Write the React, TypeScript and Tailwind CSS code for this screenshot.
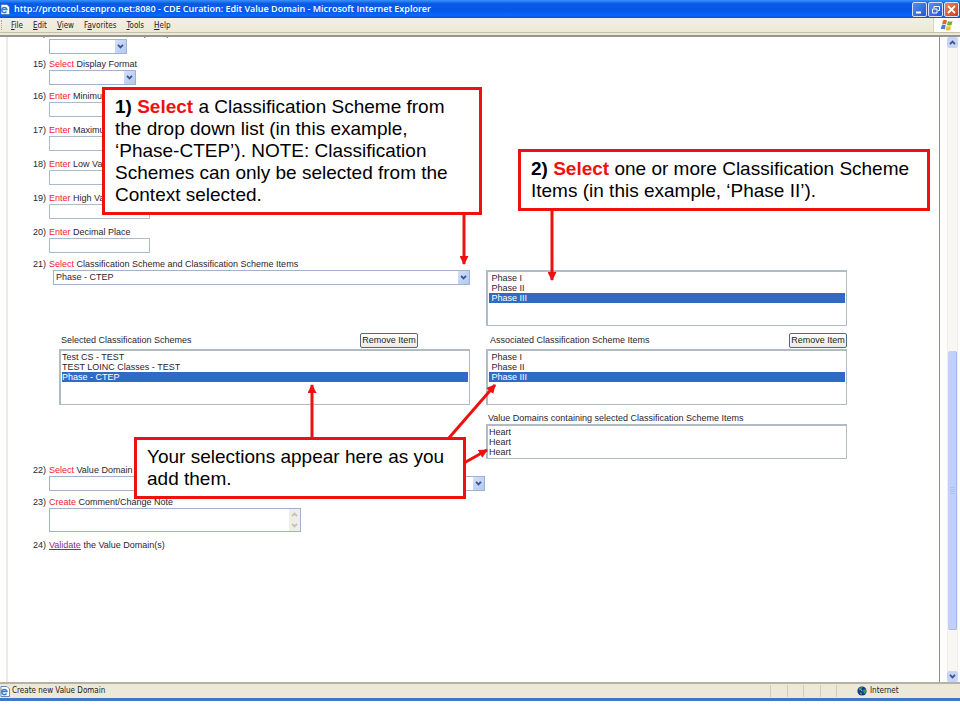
import type { ReactNode } from "react";

const FORM_FONT = "font-['Liberation_Sans',Arial,sans-serif]";
const UI_FONT = "font-['DejaVu_Sans_Condensed','DejaVu_Sans',sans-serif]";

function Chevron({ up = false, color = "#3d5589" }: { up?: boolean; color?: string }) {
  return (
    <svg viewBox="0 0 8 6" className="h-[5px] w-[7px]" fill="none" stroke={color} strokeWidth="2.200">
      <path d={up ? "M1 5 L4 2 L7 5" : "M1 1 L4 4 L7 1"} />
    </svg>
  );
}

function Dropdown({ id, className, children }: { id: string; className: string; children?: ReactNode }) {
  return (
    <div className={`relative ${className}`}>
      <select
        id={id}
        className="block h-[15px] w-full appearance-none border border-[#9fb4cb] bg-white pl-[2px] text-[9px] leading-[13px] text-[#2c2430] outline-none"
      >
        {children}
      </select>
      <span className="pointer-events-none absolute top-px right-px flex h-[13px] w-[11px] items-center justify-center bg-gradient-to-br from-[#d3dffc] to-[#b3c8f4]">
        <Chevron />
      </span>
    </div>
  );
}

function ListBox({
  id,
  items,
  selected = [],
  className,
}: {
  id: string;
  items: string[];
  selected?: string[];
  className: string;
}) {
  return (
    <select
      id={id}
      multiple
      size={5}
      defaultValue={selected}
      className={`block w-full appearance-none overflow-hidden rounded-none border border-t-2 border-l-2 border-[#b0bcc4] bg-white p-px text-[9px] text-[#2c2430] outline-none ${className}`}
    >
      {items.map((item, i) => (
        <option
          key={i}
          value={item}
          className="h-[10px] min-h-0 px-0 py-0 leading-[10px] checked:bg-[#316ac5] checked:bg-[linear-gradient(#316ac5,#316ac5)] checked:text-white"
        >
          {item}
        </option>
      ))}
    </select>
  );
}

function Item({
  n,
  verb,
  text,
  htmlFor,
  className = "mb-2",
  children,
}: {
  n: number;
  verb: string;
  text: string;
  htmlFor: string;
  className?: string;
  children: ReactNode;
}) {
  return (
    <div className={`flex ${className}`}>
      <span className="w-4 shrink-0">{n})</span>
      <div className="min-w-0 flex-1">
        <label htmlFor={htmlFor} className="block whitespace-nowrap">
          <span className="text-[#f0202c]">{verb}</span> {text}
        </label>
        {children}
      </div>
    </div>
  );
}

function TextBox({ id }: { id: string }) {
  return <input id={id} type="text" className="block h-[15px] w-[101px] border border-[#a9bccd] bg-white px-1 outline-none" />;
}

function RemoveButton() {
  return (
    <button className="h-[15px] w-[58px] rounded-[2px] border border-[#4d6a86] bg-gradient-to-b from-white to-[#ecebe4] text-center text-[9px] leading-[13px] whitespace-nowrap text-[#222]">
      Remove Item
    </button>
  );
}

function PageIcon() {
  return (
    <svg viewBox="0 0 10 11" className="h-[11px] w-[10px] shrink-0">
      <path d="M1 .5h6l2.500 2.500v7.500h-8.500z" fill="#fff" stroke="#4a6fa5" strokeWidth=".8" />
      <path d="M6.500 7.500a2.600 2.600 0 1 1 .4-2h-4.500" fill="none" stroke="#2a7fdc" strokeWidth="1.500" />
    </svg>
  );
}

function Callout({ className, children }: { className: string; children: ReactNode }) {
  return (
    <div
      className={`absolute border-[3px] border-[#ee1111] bg-white px-[10px] py-[6px] text-[19px] leading-[22px] whitespace-nowrap text-black ${className}`}
    >
      {children}
    </div>
  );
}

function Arrows() {
  return (
    <svg className="pointer-events-none absolute top-0 left-0 h-[720px] w-[960px]" stroke="#ee1111" strokeWidth="3" fill="none">
      <defs>
        <marker id="head" viewBox="0 0 9 9" refX="8" refY="4.500" markerWidth="9" markerHeight="9" markerUnits="userSpaceOnUse" orient="auto">
          <path d="M0 0 L9 4.500 L0 9z" fill="#ee1111" stroke="none" />
        </marker>
      </defs>
      <path d="M464 213V264" markerEnd="url(#head)" />
      <path d="M552 208V280" markerEnd="url(#head)" />
      <path d="M312 438V385" markerEnd="url(#head)" />
      <path d="M448 439L495 385" markerEnd="url(#head)" />
      <path d="M464 463L487 450" markerEnd="url(#head)" />
    </svg>
  );
}

function TitleBar() {
  const btn = "flex h-[15px] w-[15px] items-center justify-center rounded-[2px] border border-[#d7e3fb]";
  return (
    <header className="flex h-[18px] shrink-0 items-center bg-[linear-gradient(#3a93ff,#0a5ae6_20%,#0458e8_60%,#0868fc_85%,#0450d8)] pr-px">
      <PageIcon />
      <h1 className="flex-1 pl-1 font-['Open_Sans','Noto_Sans',sans-serif] text-[9px] leading-[18px] font-semibold whitespace-nowrap text-white">
        http://protocol.scenpro.net:8080 - CDE Curation: Edit Value Domain - Microsoft Internet Explorer
      </h1>
      <div className="flex gap-px">
        <button aria-label="Minimize" className={`${btn} bg-gradient-to-br from-[#5a8df0] to-[#2456cf]`}>
          <svg viewBox="0 0 13 13" className="h-[13px] w-[13px]"><path d="M3 9.500h5" stroke="#fff" strokeWidth="2" /></svg>
        </button>
        <button aria-label="Restore" className={`${btn} bg-gradient-to-br from-[#5a8df0] to-[#2456cf]`}>
          <svg viewBox="0 0 13 13" className="h-[13px] w-[13px]" fill="none" stroke="#fff">
            <path d="M5 5V3.500h5.500v4H9" />
            <path d="M3.500 6h4.500v4h-4.500z" />
          </svg>
        </button>
        <button aria-label="Close" className={`${btn} bg-gradient-to-br from-[#f0835f] to-[#cc3a14]`}>
          <svg viewBox="0 0 13 13" className="h-[13px] w-[13px]"><path d="M3 3l7 7M10 3l-7 7" stroke="#fff" strokeWidth="1.800" /></svg>
        </button>
      </div>
    </header>
  );
}

function MenuBar() {
  const menus: [string, string, string][] = [
    ["", "F", "ile"],
    ["", "E", "dit"],
    ["", "V", "iew"],
    ["F", "a", "vorites"],
    ["", "T", "ools"],
    ["", "H", "elp"],
  ];
  return (
    <nav className={`flex h-[15px] shrink-0 items-stretch border-b border-[#c4c0ae] bg-gradient-to-b from-[#f1f0e3] to-[#ece9d5] ${UI_FONT}`}>
      <div className="my-[2px] ml-px border-l border-dotted border-[#a8a594]" />
      <div className="flex flex-1 items-center gap-[10px] pt-px pl-[9px]">
        {menus.map(([a, u, b]) => (
          <button key={u} className="text-[8px] leading-[13px] text-[#222]">
            {a}
            <span className="underline">{u}</span>
            {b}
          </button>
        ))}
      </div>
      <div className="flex w-[27px] items-center justify-center border-l border-[#d8d4c0] bg-white">
        <svg viewBox="0 0 14 12" className="h-3 w-[14px]">
          <path d="M3 1.500q2-1.500 4 0l-1 4q-2-1.200-4 0z" fill="#e8642c" />
          <path d="M8 2q2 1.200 4.500 0l-1 4q-2.300 1.200-4.500 0z" fill="#6cb33e" />
          <path d="M1.700 6.500q2-1.300 4 0l-1 4q-2-1.300-4 0z" fill="#3f7fd8" />
          <path d="M6.700 7q2.200 1.200 4.500 0l-1 4q-2.300 1.200-4.500 0z" fill="#f2bc2a" />
        </svg>
      </div>
    </nav>
  );
}

function Scrollbar() {
  const btn = "flex h-[11px] items-center justify-center rounded-[2px] bg-[#c5d4f8]";
  return (
    <div className="flex w-[21px] shrink-0 flex-col border-l border-[#8e8e8a] bg-[#fdfdfb] pr-[2px] pl-[7px]">
      <button aria-label="Scroll up" className={btn}>
        <Chevron up />
      </button>
      <div className="flex flex-1 flex-col border-x border-[#efeee8] bg-[#f8f7f2]">
        <div className="flex-[303]" />
        <div className="flex flex-[278] flex-col items-center justify-center gap-px rounded-[2px] border-r border-b border-[#a6b9e8] bg-gradient-to-r from-[#c4d0f8] to-[#bdd0fb]">
          <i className="h-px w-[5px] bg-[#aec1f0]" />
          <i className="h-px w-[5px] bg-[#aec1f0]" />
          <i className="h-px w-[5px] bg-[#aec1f0]" />
          <i className="h-px w-[5px] bg-[#aec1f0]" />
        </div>
        <div className="flex-[41]" />
      </div>
      <button aria-label="Scroll down" className={btn}>
        <Chevron />
      </button>
    </div>
  );
}

function StatusBar() {
  return (
    <footer
      className={`flex h-[19px] shrink-0 items-stretch border-t-2 border-b-[3px] border-t-[#b5b2a4] border-b-[#3f78c8] bg-[#ece9d8] text-[8px] leading-[14px] text-[#222] ${UI_FONT}`}
    >
      <div className="flex flex-1 items-center gap-[2px]">
        <PageIcon />
        <span>Create new Value Domain</span>
      </div>
      <div className="flex w-[83px]">
        {[0, 1, 2, 3, 4].map((i) => (
          <span key={i} className="my-px flex-1 border-l border-[#cfccba]" />
        ))}
      </div>
      <div className="flex w-[107px] items-center gap-[3px] pl-1">
        <svg viewBox="0 0 10 10" className="h-[10px] w-[10px]">
          <circle cx="5" cy="5" r="4.600" fill="#123a86" />
          <path d="M1.500 3q2-2.500 4-2l-1 2.500-2 1zM6 4l3-1v3l-2 2zM3 6l2 1v2l-2-1z" fill="#3f9a4a" />
          <path d="M3.500 3.500l2 1.500" stroke="#9cc4f0" />
        </svg>
        <span>Internet</span>
      </div>
    </footer>
  );
}

export default function App() {
  return (
    <div className={`relative h-screen overflow-hidden bg-white pb-[19px] ${FORM_FONT}`}>
      <div className="flex h-full flex-col">
        <TitleBar />
        <MenuBar />
        <div className="h-1 shrink-0 border-b-2 border-[#98958a] bg-[#ece9d8]" />

        <div className="flex min-h-0 flex-1">
          <div className="w-2 shrink-0 border-r-2 border-[#eeece0]" />
          <main className="min-w-0 flex-1 overflow-hidden pr-[92px] pl-[25px] text-[9px] leading-[11px] text-[#2c2430]">
            <div className="-mt-[9px]">
              <Item n={14} verb="Select" text="Unit of Measure (UOM)" htmlFor="uom" className="mb-[5px]">
                <Dropdown id="uom" className="w-[78px]" />
              </Item>
              <Item n={15} verb="Select" text="Display Format" htmlFor="format" className="mb-[6px]">
                <Dropdown id="format" className="w-[87px]" />
              </Item>
              <Item n={16} verb="Enter" text="Minimum Length" htmlFor="minlen">
                <TextBox id="minlen" />
              </Item>
              <Item n={17} verb="Enter" text="Maximum Length" htmlFor="maxlen">
                <TextBox id="maxlen" />
              </Item>
              <Item n={18} verb="Enter" text="Low Value" htmlFor="low">
                <TextBox id="low" />
              </Item>
              <Item n={19} verb="Enter" text="High Value" htmlFor="high">
                <TextBox id="high" />
              </Item>
              <Item n={20} verb="Enter" text="Decimal Place" htmlFor="decimal" className="mb-[6px]">
                <TextBox id="decimal" />
              </Item>

              <Item n={21} verb="Select" text="Classification Scheme and Classification Scheme Items" htmlFor="scheme" className="mb-[6px]">
                <div className="grid grid-cols-[421fr_361fr] gap-x-4">
                  <Dropdown id="scheme" className="pl-1">
                    <option>Phase - CTEP</option>
                  </Dropdown>
                  <div>
                    <ListBox
                      id="scheme-items"
                      items={["\u00a0Phase I", "\u00a0Phase II", "\u00a0Phase III"]}
                      selected={["\u00a0Phase III"]}
                      className="h-[56px]"
                    />
                  </div>

                  <div className="mt-[7px] pl-[10px]">
                    <div className="mb-px flex items-center justify-between pr-[52px] pl-[2px]">
                      <label htmlFor="selected-schemes">Selected Classification Schemes</label>
                      <RemoveButton />
                    </div>
                    <ListBox
                      id="selected-schemes"
                      items={["Test CS - TEST", "TEST LOINC Classes - TEST", "Phase - CTEP"]}
                      selected={["Phase - CTEP"]}
                      className="h-[56px]"
                    />
                  </div>
                  <div className="mt-[7px]">
                    <div className="mb-px flex items-center justify-between pl-1">
                      <label htmlFor="assoc-items">Associated Classification Scheme Items</label>
                      <RemoveButton />
                    </div>
                    <ListBox
                      id="assoc-items"
                      items={["\u00a0Phase I", "\u00a0Phase II", "\u00a0Phase III"]}
                      selected={["\u00a0Phase III"]}
                      className="h-[56px]"
                    />
                  </div>

                  <div className="col-start-2 mt-2">
                    <label htmlFor="domains" className="block pl-[2px]">
                      Value Domains containing selected Classification Scheme Items
                    </label>
                    <ListBox id="domains" items={["Heart", "Heart", "Heart"]} className="h-[35px]" />
                  </div>
                </div>
              </Item>

              <Item n={22} verb="Select" text="Value Domain Concept" htmlFor="concept" className="mb-[6px]">
                <Dropdown id="concept" className="w-[436px]" />
              </Item>
              <Item n={23} verb="Create" text="Comment/Change Note" htmlFor="note">
                <div className="relative w-[252px]">
                  <textarea
                    id="note"
                    className="block h-6 w-full resize-none overflow-hidden border border-[#9fb4cb] bg-white outline-none"
                  />
                  <div className="absolute top-px right-px flex h-[22px] w-[11px] flex-col items-center justify-around bg-[#efeee6]">
                    <Chevron up color="#c6c3b6" />
                    <Chevron color="#c6c3b6" />
                  </div>
                </div>
              </Item>
              <div className="flex">
                <span className="w-4 shrink-0">24)</span>
                <p>
                  <a href="#validate" className="text-[#8a1f96] underline">
                    Validate
                  </a>{" "}
                  the Value Domain(s)
                </p>
              </div>
            </div>
          </main>
          <Scrollbar />
        </div>

        <StatusBar />
      </div>

      <Callout className="top-[87px] left-[102px] w-[380px]">
        <b>
          1) <span className="text-[#ee1111]">Select</span>
        </b>{" "}
        a Classification Scheme from
        <br />
        the drop down list (in this example,
        <br />
        ‘Phase-CTEP’). NOTE: Classification
        <br />
        Schemes can only be selected from the
        <br />
        Context selected.
      </Callout>
      <Callout className="top-[149px] left-[518px] w-[412px]">
        <b>
          2) <span className="text-[#ee1111]">Select</span>
        </b>{" "}
        one or more Classification Scheme
        <br />
        Items (in this example, ‘Phase II’).
      </Callout>
      <Callout className="top-[437px] left-[134px] w-[332px]">
        Your selections appear here as you
        <br />
        add them.
      </Callout>
      <Arrows />
    </div>
  );
}
